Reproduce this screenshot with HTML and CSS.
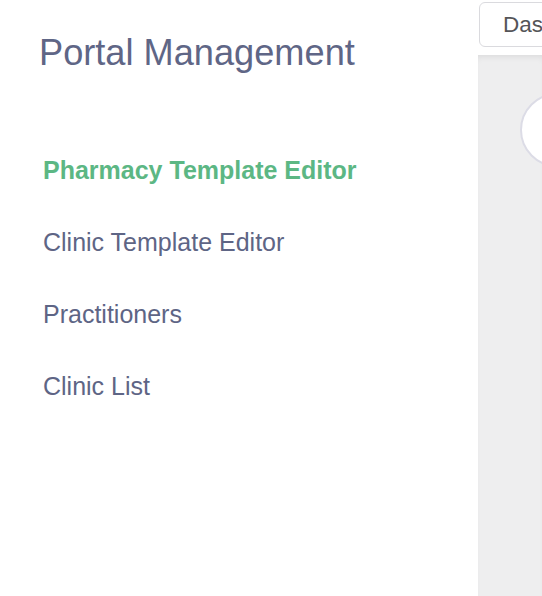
FILE: index.html
```html
<!DOCTYPE html>
<html>
<head>
<meta charset="utf-8">
<link rel="stylesheet" href="styles.css">
</head>
<body>
<div class="layout">
  <aside class="sidebar">
    <h1 class="title">Portal Management</h1>
    <nav class="nav">
      <a class="nav-item active">Pharmacy Template Editor</a>
      <a class="nav-item">Clinic Template Editor</a>
      <a class="nav-item">Practitioners</a>
      <a class="nav-item">Clinic List</a>
    </nav>
  </aside>
  <main class="main">
    <div class="topbar">
      <button class="tab-btn">Dashboard</button>
    </div>
    <div class="panel">
      <div class="avatar"></div>
    </div>
  </main>
</div>
</body>
</html>
```
FILE: styles.css
```css
html, body {
  margin: 0;
  padding: 0;
  height: 100%;
  background: #ffffff;
  font-family: "Liberation Sans", Arial, sans-serif;
  overflow: hidden;
}
.layout {
  display: flex;
  height: 596px;
}
.sidebar {
  width: 478px;
  flex: none;
}
.title {
  margin: 31px 0 0 39px;
  font-size: 36.2px;
  line-height: 44px;
  font-weight: normal;
  color: #5f6686;
}
.nav {
  display: flex;
  flex-direction: column;
  margin: 59px 0 0 43px;
}
.nav-item {
  display: block;
  font-size: 25px;
  line-height: 72px;
  color: #5e6585;
  text-decoration: none;
}
.nav-item.active {
  font-weight: bold;
  color: #5cb784;
}
.main {
  flex: 1;
  min-width: 0;
  display: flex;
  flex-direction: column;
  overflow: hidden;
}
.topbar {
  height: 55px;
  flex: none;
  padding-top: 2px;
  box-sizing: border-box;
}
.tab-btn {
  height: 45px;
  width: 180px;
  margin-left: 1px;
  padding: 0 0 0 23px;
  text-align: left;
  background: #ffffff;
  border: 1px solid #dadade;
  border-radius: 6px;
  font-family: "Liberation Sans", Arial, sans-serif;
  font-size: 22.5px;
  color: #555558;
  box-sizing: border-box;
}
.panel {
  flex: 1;
  background: #eeeeef;
  box-shadow: inset 0 5px 6px -3px rgba(0, 0, 0, 0.08);
  padding: 38px 0 0 42px;
}
.avatar {
  width: 74px;
  height: 74px;
  border-radius: 50%;
  background: #ffffff;
  border: 2px solid #dcdce6;
  box-sizing: border-box;
}
```
